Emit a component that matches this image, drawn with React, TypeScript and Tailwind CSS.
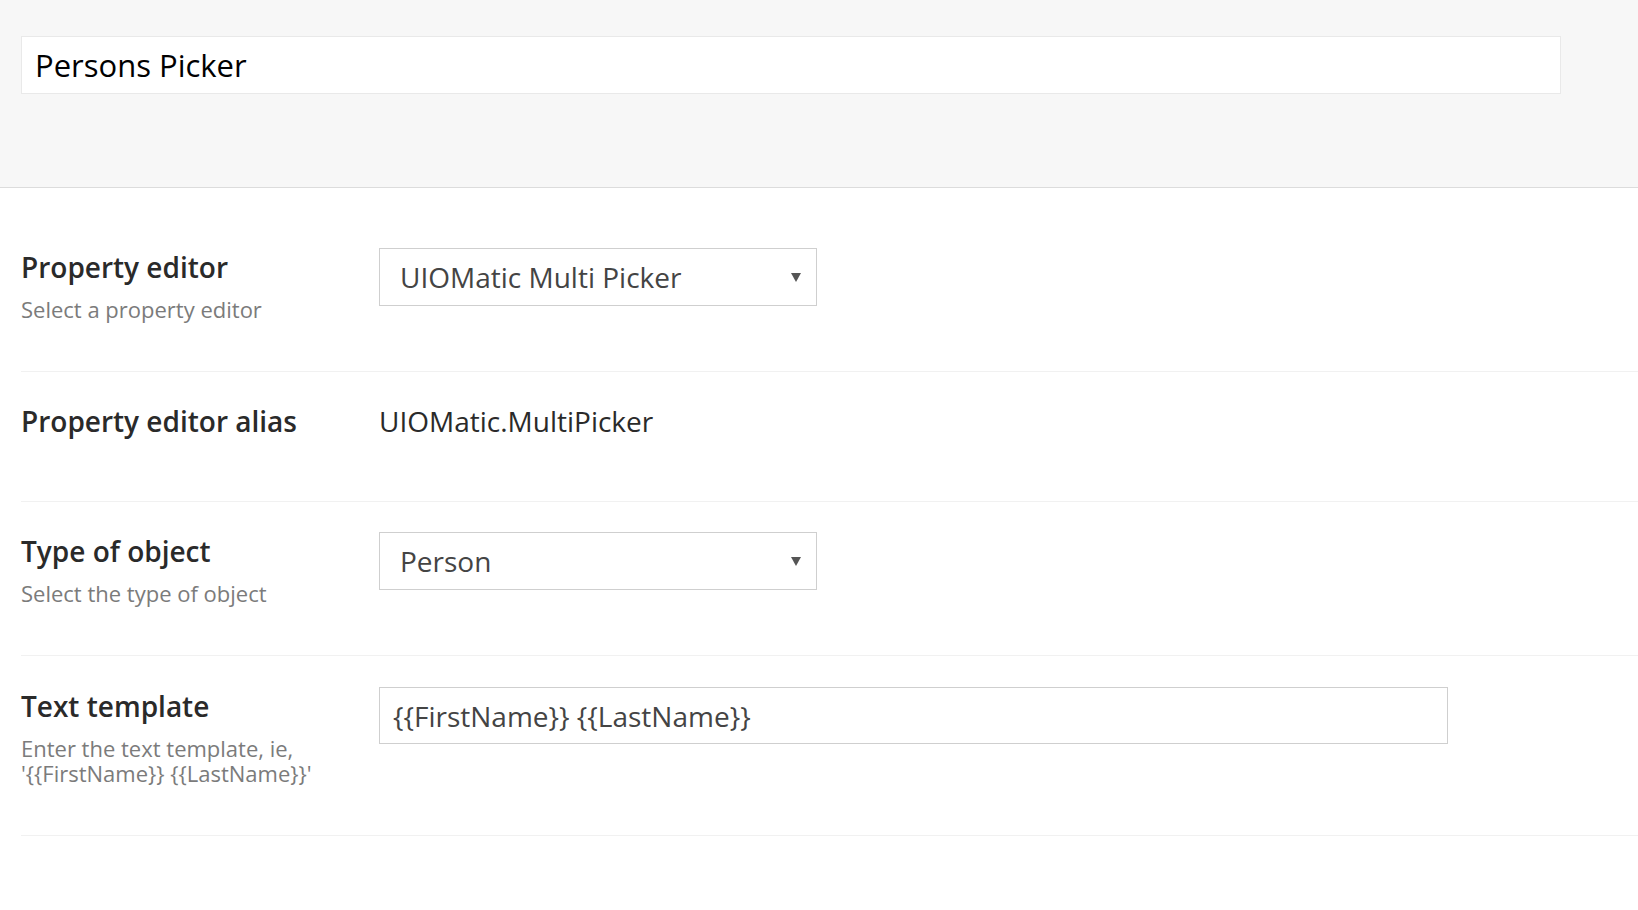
import React from "react";

const Caret = () => (
  <svg width="10" height="9" viewBox="0 0 10 9" aria-hidden="true">
    <polygon points="0,0 10,0 5,9" fill="#555" />
  </svg>
);

const SelectBox = ({ value }: { value: string }) => (
  <div className="flex h-[58px] w-[438px] items-center justify-between border border-[#cfcfcf] bg-white pl-[20px] pr-[15px]">
    <span className="text-[28px] leading-none text-[#444]">{value}</span>
    <Caret />
  </div>
);

const Label = ({ title, description }: { title: string; description?: React.ReactNode }) => (
  <div className="w-[358px] shrink-0">
    <div className="text-[28px] font-semibold leading-[39px] text-[#2a2a2a]">{title}</div>
    {description && (
      <div className="mt-[10px] text-[22px] leading-[25px] text-[#7b7b7b]">{description}</div>
    )}
  </div>
);

export default function App() {
  return (
    <div className="min-h-[910px] w-full bg-white" style={{ fontFamily: '"Open Sans", "Noto Sans", sans-serif' }}>
      {/* header with name field */}
      <header className="h-[188px] border-b border-[#dcdcdc] bg-[#f7f7f7] pl-[21px] pr-[77px] pt-[36px]">
        <div className="flex h-[58px] items-center border border-[#e9e9e9] bg-white px-[13px]">
          <span className="text-[31px] text-black">Persons Picker</span>
        </div>
      </header>

      <div className="pl-[21px] pt-[30px]">
        <div className="flex border-b border-[#f1f1f1] pb-[49px] pt-[30px]">
          <Label title="Property editor" description="Select a property editor" />
          <SelectBox value="UIOMatic Multi Picker" />
        </div>

        <div className="flex min-h-[130px] border-b border-[#f1f1f1] pt-[30px]">
          <Label title="Property editor alias" />
          <div className="text-[28px] leading-[39px] text-[#2a2a2a]">UIOMatic.MultiPicker</div>
        </div>

        <div className="flex border-b border-[#f1f1f1] pb-[49px] pt-[30px]">
          <Label title="Type of object" description="Select the type of object" />
          <SelectBox value="Person" />
        </div>

        <div className="flex border-b border-[#f1f1f1] pb-[49px] pt-[31px]">
          <Label
            title="Text template"
            description={
              <>
                Enter the text template, ie,
                <br />
                {"'{{FirstName}} {{LastName}}'"}
              </>
            }
          />
          <input
            readOnly
            value="{{FirstName}} {{LastName}}"
            className="h-[57px] w-[1069px] border border-[#cfcfcf] bg-white px-[13px] text-[28px] text-[#444] outline-none"
          />
        </div>
      </div>
    </div>
  );
}
